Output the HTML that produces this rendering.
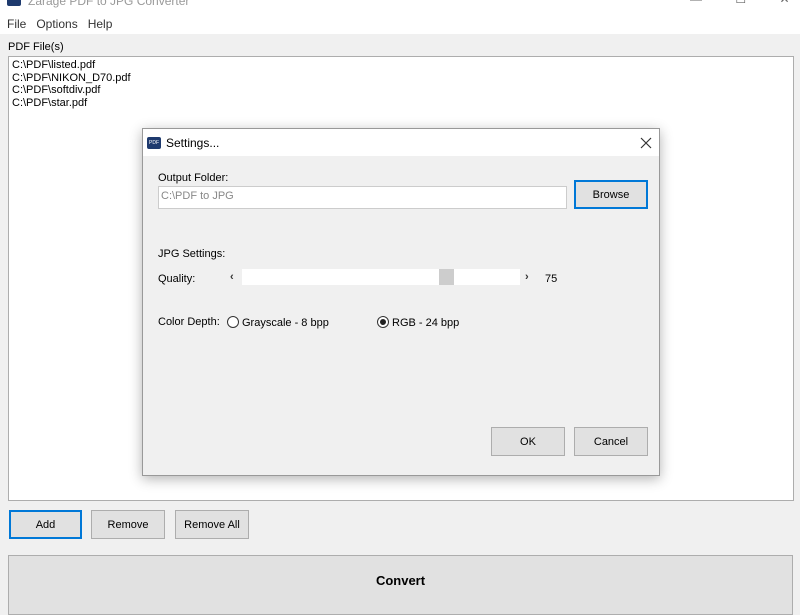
<!DOCTYPE html>
<html><head><style>
*{box-sizing:border-box;margin:0;padding:0}
body{width:800px;height:600px;overflow:hidden;background:#f0f0f0;font-family:"Liberation Sans",sans-serif;font-size:11px;color:#000;position:relative}
.a{position:absolute}
.btn{position:absolute;background:#e1e1e1;border:1px solid #adadad;display:flex;align-items:center;justify-content:center;font-size:11px}
.focus{border:2px solid #0078d7}
</style></head><body>
<div class="a" style="left:0;top:0;width:800px;height:34px;background:#fff"></div>
<div class="a" style="left:7px;top:-6px;width:14px;height:12px;background:#1e3a6e;border-radius:2px"></div>
<div class="a" style="left:28px;top:-6px;font-size:12px;color:#999">Zarage PDF to JPG Converter</div>
<div class="a" style="left:690px;top:-8px;color:#666;font-size:12px">—&nbsp;&nbsp;&nbsp;&nbsp;&nbsp;&nbsp;&nbsp;&nbsp;&nbsp;&nbsp;☐&nbsp;&nbsp;&nbsp;&nbsp;&nbsp;&nbsp;&nbsp;&nbsp;&nbsp;&nbsp;✕</div>
<div class="a" style="left:7px;top:17px;font-size:12px;color:#333">File&nbsp;&nbsp;&nbsp;Options&nbsp;&nbsp;&nbsp;Help</div>
<div class="a" style="left:8px;top:41px;font-size:11px">PDF File(s)</div>
<div class="a" style="left:8px;top:56px;width:786px;height:445px;background:#fff;border:1px solid #adadad;padding:2px 3px;line-height:12.5px;font-size:11px">C:\PDF\listed.pdf<br>C:\PDF\NIKON_D70.pdf<br>C:\PDF\softdiv.pdf<br>C:\PDF\star.pdf</div>
<div class="btn focus" style="left:9px;top:510px;width:73px;height:29px">Add</div>
<div class="btn" style="left:91px;top:510px;width:74px;height:29px">Remove</div>
<div class="btn" style="left:175px;top:510px;width:74px;height:29px">Remove All</div>
<div class="btn" style="left:8px;top:555px;width:785px;height:60px;align-items:flex-start;padding-top:17px;font-weight:bold;font-size:13px">Convert</div>

<div class="a" style="left:142px;top:128px;width:518px;height:348px;background:#f0f0f0;border:1px solid #999;box-shadow:0 3px 12px rgba(0,0,0,.3)">
 <div class="a" style="left:0;top:0;width:516px;height:27px;background:#fff"></div>
 <div class="a" style="left:4px;top:8px;width:14px;height:12px;background:#1e3a6e;border-radius:2px;color:#fff;font-size:5px;text-align:center;line-height:12px">PDF</div>
 <div class="a" style="left:23px;top:7px;font-size:12px">Settings...</div>
 <svg class="a" style="left:497px;top:8px" width="12" height="12"><path d="M1 1L11 11M11 1L1 11" stroke="#333" stroke-width="1.2"/></svg>
 <div class="a" style="left:15px;top:43px">Output Folder:</div>
 <div class="a" style="left:15px;top:57px;width:409px;height:23px;background:#fff;border:1px solid #ccc;color:#888;padding:3px 2px">C:\PDF to JPG</div>
 <div class="btn focus" style="left:431px;top:51px;width:74px;height:29px">Browse</div>
 <div class="a" style="left:15px;top:119px">JPG Settings:</div>
 <div class="a" style="left:15px;top:144px">Quality:</div>
 <div class="a" style="left:87px;top:142px;font-size:11px;color:#333;font-weight:bold">‹</div>
 <div class="a" style="left:99px;top:140px;width:278px;height:16px;background:#fff"></div>
 <div class="a" style="left:296px;top:140px;width:15px;height:16px;background:#cdcdcd"></div>
 <div class="a" style="left:382px;top:142px;color:#333;font-weight:bold">›</div>
 <div class="a" style="left:402px;top:144px">75</div>
 <div class="a" style="left:15px;top:187px">Color Depth:</div>
 <div class="a" style="left:84px;top:187px;width:12px;height:12px;border:1px solid #333;border-radius:50%;background:#fff"></div>
 <div class="a" style="left:99px;top:188px">Grayscale - 8 bpp</div>
 <div class="a" style="left:234px;top:187px;width:12px;height:12px;border:1px solid #333;border-radius:50%;background:#fff"><div class="a" style="left:2px;top:2px;width:6px;height:6px;border-radius:50%;background:#222"></div></div>
 <div class="a" style="left:249px;top:188px">RGB - 24 bpp</div>
 <div class="btn" style="left:348px;top:298px;width:74px;height:29px">OK</div>
 <div class="btn" style="left:431px;top:298px;width:74px;height:29px">Cancel</div>
</div>
</body></html>
